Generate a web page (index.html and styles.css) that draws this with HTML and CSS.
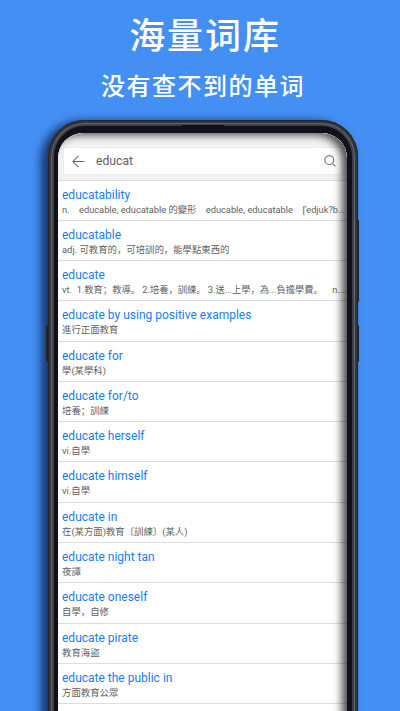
FILE: index.html
```html
<!DOCTYPE html>
<html lang="zh">
<head>
<meta charset="utf-8">
<title>educat</title>
<link rel="stylesheet" href="styles.css">
</head>
<body>
<header class="hero">
  <h1>海量词库</h1>
  <p>没有查不到的单词</p>
</header>
<main class="phone">
  <i class="key key-left"></i><i class="key key-power"></i><i class="key key-right"></i>
  <i class="speaker"></i>
  <div class="screen">
    <div class="shade"></div>
    <div class="top">
      <div class="search">
        <svg class="back" viewBox="0 0 14 14"><path d="M7 1 1 7l6 6M1 7h12.5"/></svg>
        <span class="query">educat</span>
        <svg class="glass" viewBox="0 0 13 13"><circle cx="5.7" cy="5.5" r="4.8"/><path d="m9 9 3.4 3.4"/></svg>
      </div>
    </div>
    <ul class="list">
      <li><b>educatability</b><span class="tight">n.&emsp;educable, educatable 的變形&emsp;educable, educatable&emsp;['edjuk?b...</span></li>
      <li><b>educatable</b><span>adj. 可教育的，可培訓的，能學點東西的</span></li>
      <li><b>educate</b><span class="tight">vt.&ensp;1.教育；教導。 2.培養，訓練。 3.送...上學，為...負擔學費。&emsp;n....</span></li>
      <li><b>educate by using positive examples</b><span>進行正面教育</span></li>
      <li><b>educate for</b><span>學(某學科)</span></li>
      <li><b>educate for/to</b><span>培養；訓練</span></li>
      <li><b>educate herself</b><span>vi.自學</span></li>
      <li><b>educate himself</b><span>vi.自學</span></li>
      <li><b>educate in</b><span>在(某方面)教育〔訓練〕(某人)</span></li>
      <li><b>educate night tan</b><span>夜譚</span></li>
      <li><b>educate oneself</b><span>自學，自修</span></li>
      <li><b>educate pirate</b><span>教育海盜</span></li>
      <li><b>educate the public in</b><span>方面教育公眾</span></li>
    </ul>
  </div>
</main>
</body>
</html>
```
FILE: styles.css
```css
* { box-sizing: border-box; }
html, body { height: 100%; }
body {
  margin: 0;
  overflow: hidden;
  background: #448ff4;
  font-family: Roboto, "Noto Sans CJK TC", sans-serif;
}
.hero {
  height: 120px;
  padding-top: 7px;
  color: #fff;
  text-align: center;
  font-family: "Noto Sans CJK SC", sans-serif;
  font-weight: 500;
}
.hero h1 {
  margin: 0;
  padding-left: 10px;
  font-size: 36px;
  line-height: 52px;
  letter-spacing: 1.9px;
  font-weight: 500;
}
.hero p {
  margin: 9px 0 0;
  padding-left: 6px;
  font-size: 24px;
  line-height: 34px;
  letter-spacing: 1.5px;
}
.phone {
  position: relative;
  width: 310px;
  height: 610px;
  margin-left: 48px;
  padding: 13px 11px 0 10px;
  border-radius: 37px 37px 0 0;
  background: #111217;
  box-shadow:
    inset 0 0 0 1px #25262b,
    inset 0 0 0 3px #36373c,
    inset 0 0 0 4px #66676d,
    inset 0 0 0 6px #3e3f45,
    -6px 2px 9px 1px rgba(15, 35, 80, .8);
}
.key {
  position: absolute;
  width: 2px;
  background: #24252b;
  border-radius: 1px;
}
.key-left { left: -2px; top: 205px; height: 37px; }
.key-power { right: -1px; top: 100px; height: 82px; }
.key-right { right: -1px; top: 205px; height: 37px; }
.speaker {
  position: absolute;
  left: 134px;
  top: 5px;
  width: 42px;
  height: 2px;
  background: #101115;
}
.screen {
  position: relative;
  height: 100%;
  overflow: hidden;
  border-radius: 25px 25px 0 0;
  background: #fff;
}
.top {
  height: 46.6px;
  padding: 14px 5px 0;
  background: #f3f3f3;
}
.search {
  display: flex;
  align-items: center;
  height: 28px;
  padding: 0 5px 0 8px;
  border: 1px solid #ebebeb;
  background: #fff;
}
.search svg { fill: none; stroke: #666; stroke-width: 1.1; }
.back { width: 13px; height: 13px; }
.query {
  flex: 1;
  padding-left: 11px;
  color: #5f5f5f;
  font-size: 12.2px;
}
.glass { width: 12px; height: 12px; }
.list { margin: 0; padding: 0; list-style: none; }
.list li {
  height: 40.27px;
  padding: 6px 0 0 4px;
  border-top: 1px solid #ddd;
}
.list li:last-child { height: 41.27px; border-bottom: 1px solid #ddd; }
.list b, .list span {
  display: block;
  white-space: nowrap;
}
.list b {
  color: #187df0;
  font-weight: 400;
  font-size: 12px;
  line-height: 16px;
}
.list span {
  color: #616161;
  font-size: 9.4px;
  line-height: 14px;
}
.list .tight { font-size: 9.28px; }
.shade {
  position: absolute;
  z-index: 1;
  inset: 0;
  border-radius: 25px 25px 0 0;
  box-shadow: inset -6px 3px 9px -1px rgba(0, 0, 0, .7);
}
```
